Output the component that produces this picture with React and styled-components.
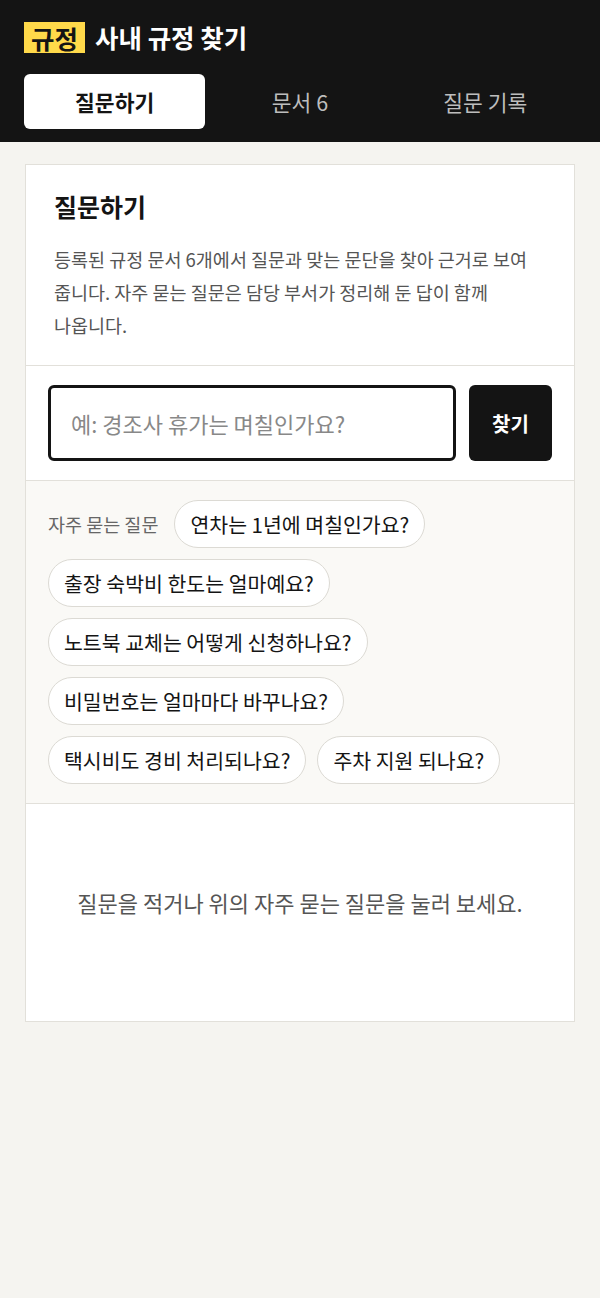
import React from 'react';
import styled, { createGlobalStyle } from "styled-components";

const GlobalStyle = createGlobalStyle`
  body {
    margin: 0;
    background: #f5f4f0;
    font-family: "Noto Sans CJK KR", "Noto Sans", sans-serif;
    color: #141414;
  }
`;

const Header = styled.header`
  background: #141414;
  padding: 20px 24px 13px;
`;

const TitleRow = styled.h1`
  display: flex;
  align-items: center;
  gap: 10px;
  margin: 0 0 20px;
  font-size: 25.5px;
  font-weight: 700;
  line-height: 34px;
  color: #fff;
`;

const Badge = styled.span`
  background: #ffd94a;
  color: #141414;
  padding: 0 7px;
  line-height: 31px;
`;

const Tabs = styled.nav`
  display: grid;
  grid-template-columns: repeat(3, 1fr);
  gap: 4px;
`;

const Tab = styled.button`
  height: 55px;
  border: none;
  border-radius: 6px;
  background: ${p => (p.$active ? "#fff" : "transparent")};
  color: ${p => (p.$active ? "#141414" : "#bdbdbd")};
  font-family: inherit;
  font-size: 21.5px;
  font-weight: ${p => (p.$active ? 700 : 400)};
  cursor: pointer;
`;

const Main = styled.main`
  padding: 22px 25px;
`;

const Card = styled.section`
  background: #fff;
  border: 1px solid #e2e0da;
`;

const Intro = styled.div`
  padding: 24px 28px 23px;
  border-bottom: 1px solid #e2e0da;
`;

const Heading = styled.h2`
  margin: 0 0 20px;
  font-size: 25px;
  font-weight: 700;
  line-height: 34px;
`;

const Desc = styled.p`
  margin: 0;
  max-width: 490px;
  font-size: 18.5px;
  line-height: 33px;
  color: #555;
  word-break: keep-all;
`;

const SearchRow = styled.form`
  display: flex;
  gap: 13px;
  padding: 19px 22px;
  border-bottom: 1px solid #e2e0da;
`;

const Input = styled.input`
  flex: 1;
  min-width: 0;
  height: 76px;
  box-sizing: border-box;
  border: 3px solid #141414;
  border-radius: 6px;
  padding: 0 20px;
  font-family: inherit;
  font-size: 22px;
  color: #141414;
  &::placeholder {
    color: #888;
  }
`;

const SearchButton = styled.button`
  width: 83px;
  height: 76px;
  border: none;
  border-radius: 6px;
  background: #141414;
  color: #fff;
  font-family: inherit;
  font-size: 20px;
  font-weight: 700;
`;

const Faq = styled.div`
  display: flex;
  flex-wrap: wrap;
  align-items: center;
  gap: 11px;
  padding: 19px 22px 19px;
  background: #faf9f6;
  border-bottom: 1px solid #e2e0da;
`;

const FaqLabel = styled.span`
  font-size: 18.5px;
  color: #666;
  margin-right: 5px;
`;

const Chip = styled.button`
  height: 48px;
  padding: 0 15px;
  border: 1px solid #dcdad4;
  border-radius: 24px;
  background: #fff;
  color: #141414;
  font-family: inherit;
  font-size: 20.5px;
`;

const Empty = styled.p`
  margin: 0;
  padding: 83px 0 104px;
  text-align: center;
  font-size: 22px;
  line-height: 30px;
  color: #555;
`;

const faqs = [
  "연차는 1년에 며칠인가요?",
  "출장 숙박비 한도는 얼마예요?",
  "노트북 교체는 어떻게 신청하나요?",
  "비밀번호는 얼마마다 바꾸나요?",
  "택시비도 경비 처리되나요?",
  "주차 지원 되나요?",
];

const App = () => {
  return (
    <>
      <GlobalStyle />
      <Header>
        <TitleRow>
          <Badge>규정</Badge>
          사내 규정 찾기
        </TitleRow>
        <Tabs>
          <Tab $active>질문하기</Tab>
          <Tab>문서 6</Tab>
          <Tab>질문 기록</Tab>
        </Tabs>
      </Header>
      <Main>
        <Card>
          <Intro>
            <Heading>질문하기</Heading>
            <Desc>
              등록된 규정 문서 6개에서 질문과 맞는 문단을 찾아 근거로 보여
              줍니다. 자주 묻는 질문은 담당 부서가 정리해 둔 답이 함께
              나옵니다.
            </Desc>
          </Intro>
          <SearchRow onSubmit={e => e.preventDefault()}>
            <Input placeholder="예: 경조사 휴가는 며칠인가요?" />
            <SearchButton type="submit">찾기</SearchButton>
          </SearchRow>
          <Faq>
            <FaqLabel>자주 묻는 질문</FaqLabel>
            {faqs.map(q => (
              <Chip key={q}>{q}</Chip>
            ))}
          </Faq>
          <Empty>질문을 적거나 위의 자주 묻는 질문을 눌러 보세요.</Empty>
        </Card>
      </Main>
    </>
  );
};

export default App;
